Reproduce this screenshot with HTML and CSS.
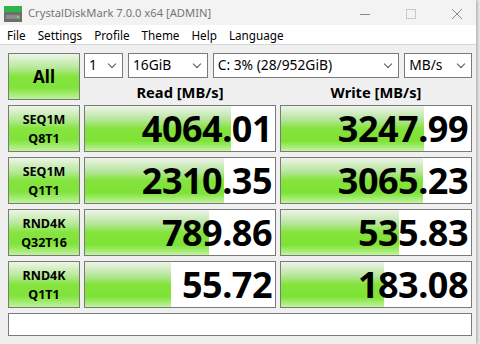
FILE: index.html
```html
<!DOCTYPE html>
<html lang="en">
<head>
    <meta charset="UTF-8">
    <title>CrystalDiskMark 7.0.0 x64 [ADMIN]</title>
    <link rel="stylesheet" href="styles.css">
</head>
<body>
    <div class="window">
        <div class="titlebar">
            <svg class="app-icon" width="18" height="16" viewBox="0 0 18 16">
                <rect x="0" y="0" width="18" height="6" fill="#2fb34a"/>
                <rect x="0" y="6" width="18" height="10" fill="#6e6e6e"/>
                <rect x="2" y="9" width="14" height="4" fill="#8c8c8c"/>
                <rect x="13" y="10" width="2" height="2" fill="#5fe05f"/>
            </svg>
            <span class="title">CrystalDiskMark 7.0.0 x64 [ADMIN]</span>
            <div class="controls">
                <svg width="12" height="12" viewBox="0 0 12 12"><path d="M1 6.5H11" stroke="#8a8a8a" stroke-width="1"/></svg>
                <svg width="12" height="12" viewBox="0 0 12 12"><rect x="1.5" y="1.5" width="9" height="9" fill="none" stroke="#c8c8c8"/></svg>
                <svg width="12" height="12" viewBox="0 0 12 12"><path d="M1 1L11 11M11 1L1 11" stroke="#8a8a8a" stroke-width="1"/></svg>
            </div>
        </div>

        <div class="menubar">
            <span>File</span>
            <span>Settings</span>
            <span>Profile</span>
            <span>Theme</span>
            <span>Help</span>
            <span>Language</span>
        </div>

        <div class="main">
            <div class="board">
                <div class="btn btn-all">All</div>
                <div class="top">
                    <div class="selects">
                        <div class="select w-count">1<i></i></div>
                        <div class="select w-size">16GiB<i></i></div>
                        <div class="select w-drive">C: 3% (28/952GiB)<i></i></div>
                        <div class="select w-unit">MB/s<i></i></div>
                    </div>
                    <div class="heads">
                        <div>Read [MB/s]</div>
                        <div>Write [MB/s]</div>
                    </div>
                </div>

                <div class="btn">SEQ1M<br>Q8T1</div>
                <div class="result"><div class="bar" style="width: 77%"></div><span>4064.01</span></div>
                <div class="result"><div class="bar" style="width: 75.3%"></div><span>3247.99</span></div>

                <div class="btn">SEQ1M<br>Q1T1</div>
                <div class="result"><div class="bar" style="width: 73%"></div><span>2310.35</span></div>
                <div class="result"><div class="bar" style="width: 74.7%"></div><span>3065.23</span></div>

                <div class="btn">RND4K<br>Q32T16</div>
                <div class="result"><div class="bar" style="width: 65%"></div><span>789.86</span></div>
                <div class="result"><div class="bar" style="width: 62%"></div><span>535.83</span></div>

                <div class="btn">RND4K<br>Q1T1</div>
                <div class="result"><div class="bar" style="width: 45.5%"></div><span>55.72</span></div>
                <div class="result"><div class="bar" style="width: 54%"></div><span>183.08</span></div>
            </div>
            <div class="status"></div>
        </div>
    </div>
</body>
</html>
```

FILE: styles.css
```css
body {
    margin: 0;
    font-family: 'Noto Sans', 'Open Sans', sans-serif;
    background-color: #f0f0f0;
    color: #000;
    width: 480px;
    height: 344px;
    overflow: hidden;
}
.window {
    width: 476px;
    height: 344px;
    background-color: #f0f0f0;
    box-shadow: 2px 0 3px rgba(0, 0, 0, 0.25);
}
.titlebar {
    height: 25px;
    background-color: #f3f3f3;
    display: flex;
    align-items: center;
    padding-left: 4px;
}
.app-icon {
    margin-top: 3px;
}
.title {
    margin-left: 6px;
    font-size: 11.2px;
    color: #767676;
}
.controls {
    margin-left: auto;
    display: flex;
    gap: 34px;
    padding-right: 13px;
    padding-top: 2px;
}
.menubar {
    height: 19px;
    background-color: #fff;
    border-bottom: 1px solid #d6d6d6;
    display: flex;
    align-items: center;
    gap: 12px;
    padding-left: 7px;
    font-size: 11.7px;
}
.main {
    padding: 8px 4px 0 8px;
}
.board {
    display: grid;
    grid-template-columns: 72px 192px 192px;
    grid-auto-rows: 47px;
    column-gap: 4px;
    row-gap: 5px;
}
.btn {
    box-sizing: border-box;
    border: 1px solid #7a7a7a;
    background: linear-gradient(#eef5e8 0%, #b6e99a 30%, #86e43e 50%, #80e33a 75%, #bff29c 100%);
    display: flex;
    align-items: center;
    justify-content: center;
    text-align: center;
    font-weight: 700;
    font-size: 12.5px;
    line-height: 19px;
}
.btn-all {
    font-size: 17px;
}
.top {
    grid-column: 2 / 4;
    display: flex;
    flex-direction: column;
}
.selects {
    display: flex;
    gap: 5px;
    height: 25px;
}
.select {
    box-sizing: border-box;
    height: 25px;
    background-color: #fff;
    border: 1px solid #7a7a7a;
    font-size: 13.8px;
    line-height: 22px;
    padding-left: 4px;
    position: relative;
}
.select i {
    position: absolute;
    right: 7px;
    top: 7px;
    width: 5px;
    height: 5px;
    border-right: 1px solid #555;
    border-bottom: 1px solid #555;
    transform: rotate(45deg);
}
.w-count { width: 39px; }
.w-size { width: 80px; }
.w-drive { width: 187px; }
.w-unit { width: 68px; }
.heads {
    display: flex;
    gap: 4px;
    flex: 1;
}
.heads div {
    flex: 1;
    text-align: center;
    font-weight: 700;
    font-size: 14.7px;
    line-height: 29px;
}
.result {
    box-sizing: border-box;
    border: 1px solid #7a7a7a;
    background-color: #fff;
    position: relative;
    overflow: hidden;
}
.bar {
    position: absolute;
    left: 0;
    top: 0;
    bottom: 0;
    background: linear-gradient(#eef3ea 0%, #b6e69c 30%, #84e33c 50%, #7ee336 78%, #c3f3a3 100%);
}
.result span {
    position: relative;
    display: block;
    text-align: right;
    padding-right: 3px;
    font-weight: 700;
    font-size: 36px;
    line-height: 45px;
    letter-spacing: -0.5px;
}
.status {
    margin-top: 5px;
    width: 464px;
    height: 23px;
    box-sizing: border-box;
    background-color: #fff;
    border: 1px solid #7a7a7a;
}
```
